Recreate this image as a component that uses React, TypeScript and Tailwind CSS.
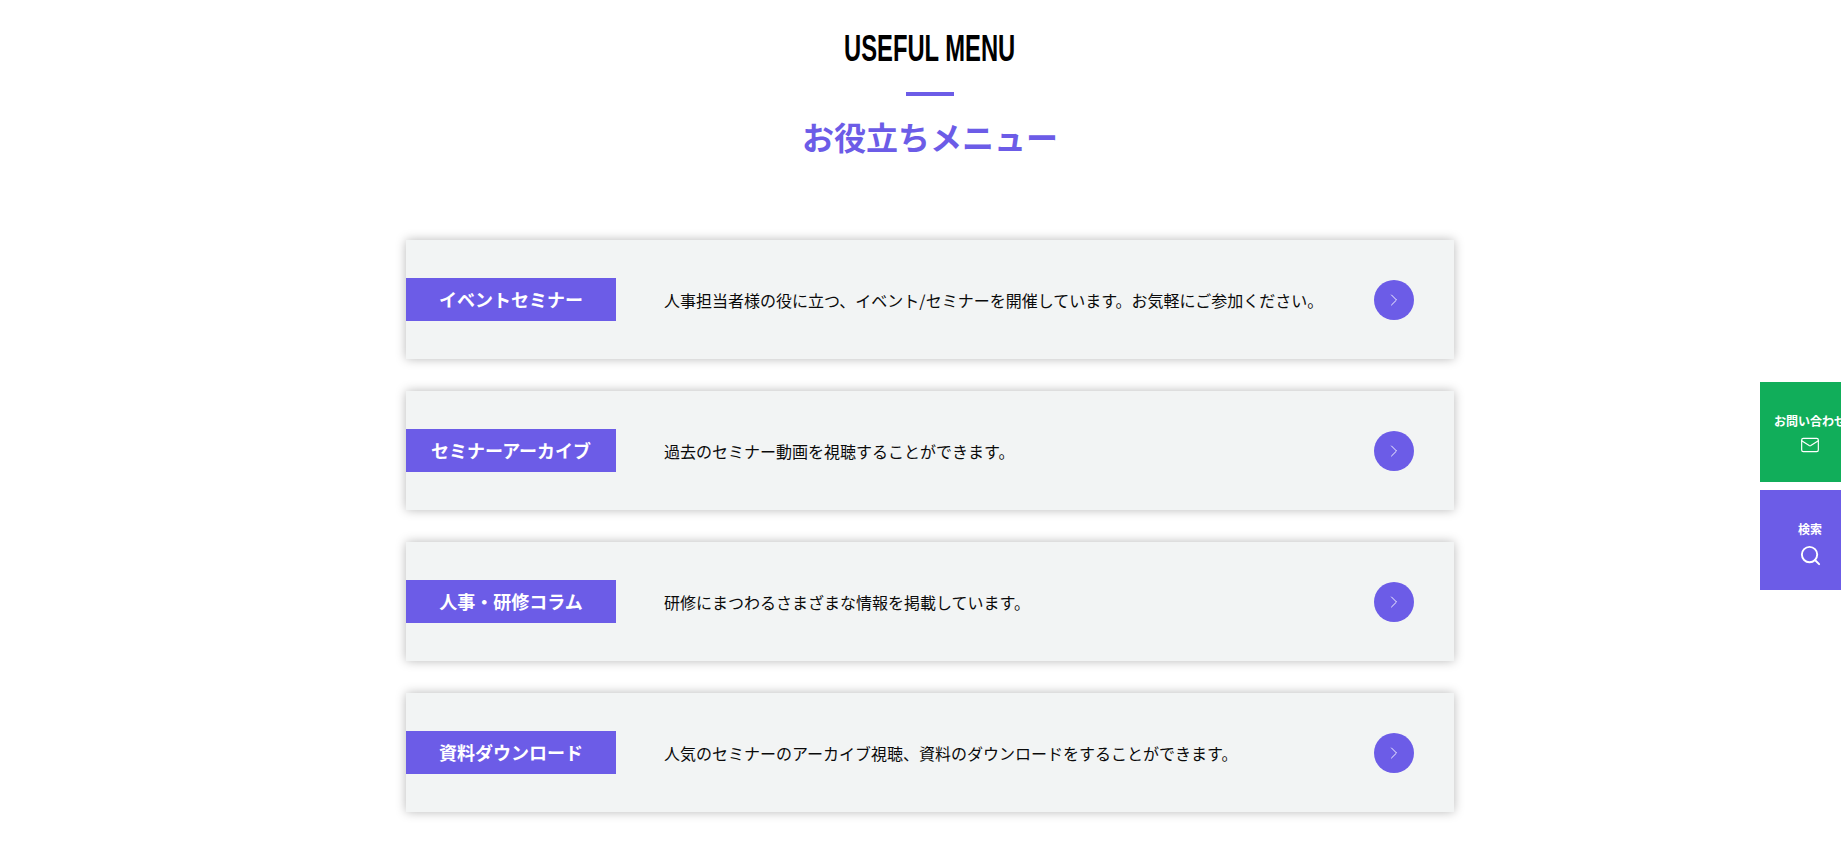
import { ChevronRight, Mail, Search } from "lucide-react";

const menus = [
  { label: "イベントセミナー", text: "人事担当者様の役に立つ、イベント/セミナーを開催しています。お気軽にご参加ください。" },
  { label: "セミナーアーカイブ", text: "過去のセミナー動画を視聴することができます。" },
  { label: "人事・研修コラム", text: "研修にまつわるさまざまな情報を掲載しています。" },
  { label: "資料ダウンロード", text: "人気のセミナーのアーカイブ視聴、資料のダウンロードをすることができます。" },
];

export default function App() {
  return (
    <div className="h-[850px] overflow-hidden bg-white font-['Noto_Sans_CJK_JP','Noto_Sans',sans-serif] text-black">
      {/* page is wider than the window, so everything centres a bit to the right */}
      <div className="relative h-full w-[1860px]">
        {/* HEADING */}
        <div className="flex flex-col items-center pt-[24px]">
          <h2 className="h-[50px] scale-x-[0.66] font-['Liberation_Sans_Narrow','Liberation_Sans',sans-serif] text-[36px] leading-[50px] font-bold">
            USEFUL MENU
          </h2>
          <div className="mt-[18px] h-[4px] w-[48px] bg-[#6c5ce7]"></div>
          <p className="mt-[16px] text-[32px] leading-[48px] font-bold text-[#6c5ce7]">お役立ちメニュー</p>
        </div>

        {/* MENU LIST */}
        <div className="mx-auto mt-[80px] flex w-[1048px] flex-col gap-[32px]">
          {menus.map((m) => (
            <a
              key={m.label}
              className="flex h-[119px] items-center bg-[#f2f4f4] shadow-[0_0_10px_rgba(0,0,0,0.28)]"
            >
              <div className="flex h-[43px] w-[210px] items-center justify-center bg-[#6c5ce7] text-[18px] font-bold text-white">
                {m.label}
              </div>
              <p className="ml-[48px] flex-1 text-[16px] text-[#0a0a0a]">{m.text}</p>
              <div className="mr-[40px] flex h-[40px] w-[40px] items-center justify-center rounded-full bg-[#6c5ce7] text-white">
                <ChevronRight size={20} strokeWidth={1.1} />
              </div>
            </a>
          ))}
        </div>

        {/* SIDE BUTTONS */}
        <div className="absolute top-[382px] right-0 flex w-[100px] flex-col gap-[8px] text-white">
          <div className="flex h-[100px] flex-col items-center justify-center gap-[5px] bg-[#11ae5a] pt-[3px]">
            <span className="text-[12px] font-bold whitespace-nowrap">お問い合わせ</span>
            <Mail size={20} strokeWidth={1.4} />
          </div>
          <div className="flex h-[100px] flex-col items-center justify-center gap-[6px] bg-[#6c5ce7] pt-[6px]">
            <span className="text-[12px] font-bold">検索</span>
            <Search size={23} strokeWidth={2} />
          </div>
        </div>
      </div>
    </div>
  );
}
